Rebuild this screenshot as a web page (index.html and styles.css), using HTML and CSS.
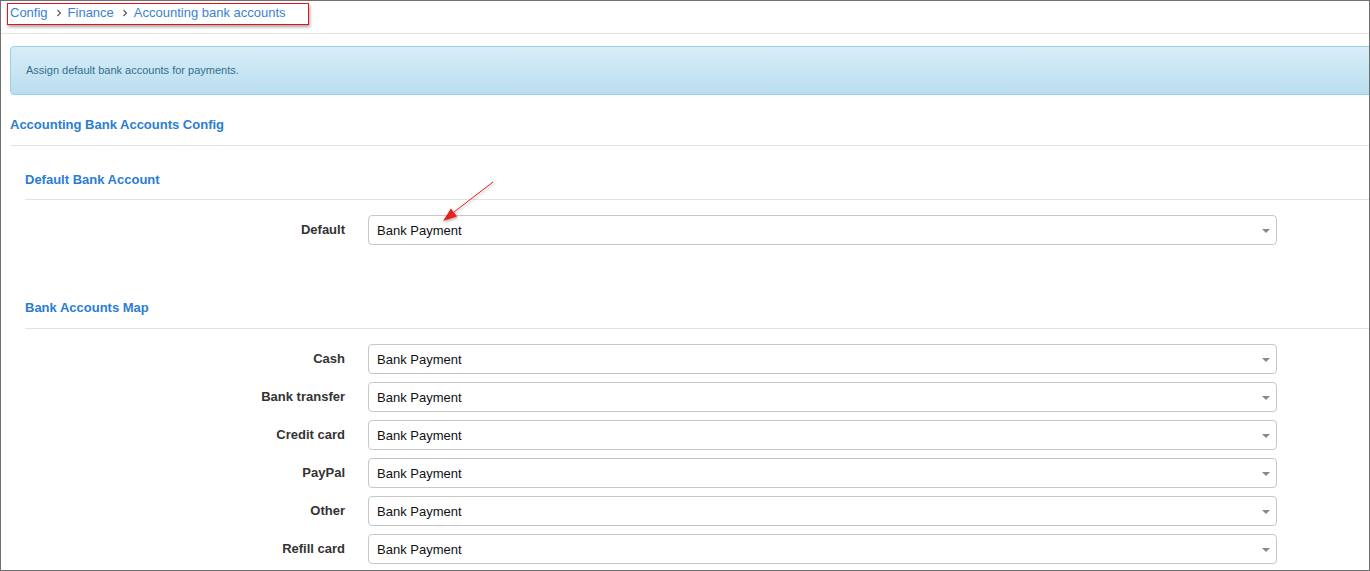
FILE: index.html
```html
<!DOCTYPE html>
<html>
<head>
<meta charset="utf-8">
<link rel="stylesheet" href="styles.css">
</head>
<body>
<div class="frame">
  <div class="crumbs">
    <a class="crumb">Config</a>
    <svg class="chev" width="6" height="8" viewBox="0 0 6 8"><path d="M1.5 1 L4.5 4 L1.5 7" fill="none" stroke="#555" stroke-width="1.1"/></svg>
    <a class="crumb">Finance</a>
    <svg class="chev" width="6" height="8" viewBox="0 0 6 8"><path d="M1.5 1 L4.5 4 L1.5 7" fill="none" stroke="#555" stroke-width="1.1"/></svg>
    <a class="crumb">Accounting bank accounts</a>
    <div class="annot-box"></div>
  </div>
  <div class="content">
    <div class="alert">Assign default bank accounts for payments.</div>
    <h2 class="panel-title">Accounting Bank Accounts Config</h2>
    <div class="section">
      <h3 class="section-title">Default Bank Account</h3>
      <div class="rows">
        <div class="row">
          <label class="lbl">Default</label>
          <div class="select"><span>Bank Payment</span><i class="caret"></i></div>
        </div>
      </div>
      <h3 class="section-title second">Bank Accounts Map</h3>
      <div class="rows">
        <div class="row"><label class="lbl">Cash</label><div class="select"><span>Bank Payment</span><i class="caret"></i></div></div>
        <div class="row"><label class="lbl">Bank transfer</label><div class="select"><span>Bank Payment</span><i class="caret"></i></div></div>
        <div class="row"><label class="lbl">Credit card</label><div class="select"><span>Bank Payment</span><i class="caret"></i></div></div>
        <div class="row"><label class="lbl">PayPal</label><div class="select"><span>Bank Payment</span><i class="caret"></i></div></div>
        <div class="row"><label class="lbl">Other</label><div class="select"><span>Bank Payment</span><i class="caret"></i></div></div>
        <div class="row"><label class="lbl">Refill card</label><div class="select"><span>Bank Payment</span><i class="caret"></i></div></div>
      </div>
    </div>
  </div>
  <svg class="arrow" width="60" height="45" viewBox="0 0 60 45">
    <defs>
      <filter id="sh" x="-20%" y="-20%" width="150%" height="150%">
        <feDropShadow dx="1" dy="1.5" stdDeviation="1" flood-color="#000" flood-opacity="0.3"/>
      </filter>
    </defs>
    <g filter="url(#sh)">
      <line x1="53" y1="1" x2="14" y2="31" stroke="#e8201c" stroke-width="1"/>
      <path d="M3 40 L10.9 27.4 L17.1 35.4 Z" fill="#e8201c"/>
    </g>
  </svg>
</div>
</body>
</html>
```

FILE: styles.css
```css
* { box-sizing: border-box; }
html, body { margin: 0; padding: 0; background: #fff; }
body { font-family: "Liberation Sans", Arial, sans-serif; font-size: 13px; color: #333; }

.frame {
  position: relative;
  width: 1370px;
  height: 571px;
  border: 1px solid #707070;
  overflow: hidden;
}

.crumbs {
  position: relative;
  height: 33px;
  border-bottom: 1px solid #e3e3e3;
  display: flex;
  align-items: center;
  padding: 0 0 8px 9px;
}
.crumb { color: #3b80d2; font-size: 13px; line-height: 16px; }
.chev { margin: 0 6px 0 8px; }

.annot-box {
  position: absolute;
  left: 6px;
  top: 2px;
  width: 302px;
  height: 22px;
  border: 1px solid #e5141b;
  box-shadow: 1px 2px 3px rgba(0,0,0,0.35);
}

.content {
  padding: 12px 0 0 9px;
  margin-right: -30px;
}

.alert {
  height: 49px;
  border: 1px solid #9acfea;
  border-radius: 4px;
  background: linear-gradient(#d9edf7, #b9def0);
  color: #31708f;
  font-size: 11px;
  padding: 0 0 2px 15px;
  display: flex;
  align-items: center;
}

.panel-title {
  margin: 20px 0 0 0;
  font-size: 13px;
  line-height: 20px;
  font-weight: bold;
  color: #2a7dd1;
  padding-bottom: 10px;
  border-bottom: 1px solid #e3e3e3;
}

.section { padding-left: 15px; }

.section-title {
  margin: 24px 0 0 0;
  font-size: 13px;
  line-height: 20px;
  font-weight: bold;
  color: #2a7dd1;
  padding-bottom: 9px;
  border-bottom: 1px solid #e3e3e3;
}
.section-title.second { margin-top: 53px; padding-bottom: 10px; }

.rows {
  margin-top: 15px;
  display: flex;
  flex-direction: column;
  gap: 8px;
}

.row {
  display: grid;
  grid-template-columns: 320px 909px;
  column-gap: 23px;
  align-items: center;
}

.lbl {
  text-align: right;
  font-weight: bold;
  color: #333;
  font-size: 13px;
  margin-top: -2px;
}

.select {
  position: relative;
  height: 30px;
  border: 1px solid #c8c8c8;
  border-radius: 4px;
  display: flex;
  align-items: center;
  padding-left: 8px;
  color: #111;
  font-size: 13px;
}
.caret {
  position: absolute;
  right: 6px;
  top: 13px;
  width: 0;
  height: 0;
  border-left: 4px solid transparent;
  border-right: 4px solid transparent;
  border-top: 4px solid #888;
}

.arrow {
  position: absolute;
  left: 439px;
  top: 180px;
}
```
